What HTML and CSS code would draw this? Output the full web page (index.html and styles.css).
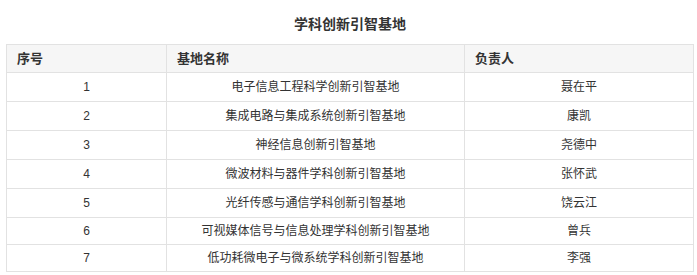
FILE: index.html
```html
<!DOCTYPE html>
<html>
<head>
  <meta charset="utf-8">
  <title>学科创新引智基地</title>
  <link rel="stylesheet" href="styles.css">
</head>
<body>
  <div class="wrap">
    <h2 class="title">学科创新引智基地</h2>
    <table class="base-table">
      <colgroup>
        <col class="col-no">
        <col class="col-name">
        <col class="col-owner">
      </colgroup>
      <thead>
        <tr>
          <th>序号</th>
          <th>基地名称</th>
          <th>负责人</th>
        </tr>
      </thead>
      <tbody>
        <tr><td class="num">1</td><td>电子信息工程科学创新引智基地</td><td>聂在平</td></tr>
        <tr><td class="num">2</td><td>集成电路与集成系统创新引智基地</td><td>康凯</td></tr>
        <tr><td class="num">3</td><td>神经信息创新引智基地</td><td>尧德中</td></tr>
        <tr><td class="num">4</td><td>微波材料与器件学科创新引智基地</td><td>张怀武</td></tr>
        <tr><td class="num">5</td><td>光纤传感与通信学科创新引智基地</td><td>饶云江</td></tr>
        <tr class="tight"><td class="num">6</td><td>可视媒体信号与信息处理学科创新引智基地</td><td>曾兵</td></tr>
        <tr class="tight"><td class="num">7</td><td>低功耗微电子与微系统学科创新引智基地</td><td>李强</td></tr>
      </tbody>
    </table>
    <div class="more"><a href="#">更多</a></div>
  </div>
</body>
</html>
```

FILE: styles.css
```css
body {
  margin: 0;
  background: #fff;
  color: #333;
  font-family: "Liberation Sans", "Noto Sans CJK SC", sans-serif;
  overflow: hidden;
}
.wrap { padding: 0 3px 0 6px; }
.title {
  margin: 14px 0 10px;
  font-size: 14px;
  line-height: 20px;
  text-align: center;
  color: #333;
}
.base-table {
  width: 100%;
  table-layout: fixed;
  border-collapse: collapse;
  border: 1px solid #e2e2e2;
  font-size: 12px;
}
.col-no { width: 160px; }
.col-name { width: 298px; }
.base-table th {
  background: #f6f6f6;
  border: 1px solid #e2e2e2;
  padding: 0 10px;
  line-height: 27px;
  font-size: 13px;
  text-align: left;
}
.base-table td {
  border: 1px solid #e2e2e2;
  padding: 0 10px;
  line-height: 28px;
  text-align: center;
}
.base-table .tight td { line-height: 26px; }
.more {
  padding: 1px 0 0 504px;
  font-size: 12px;
  line-height: 18px;
}
.more a { color: #2a5fd8; text-decoration: none; }
```
